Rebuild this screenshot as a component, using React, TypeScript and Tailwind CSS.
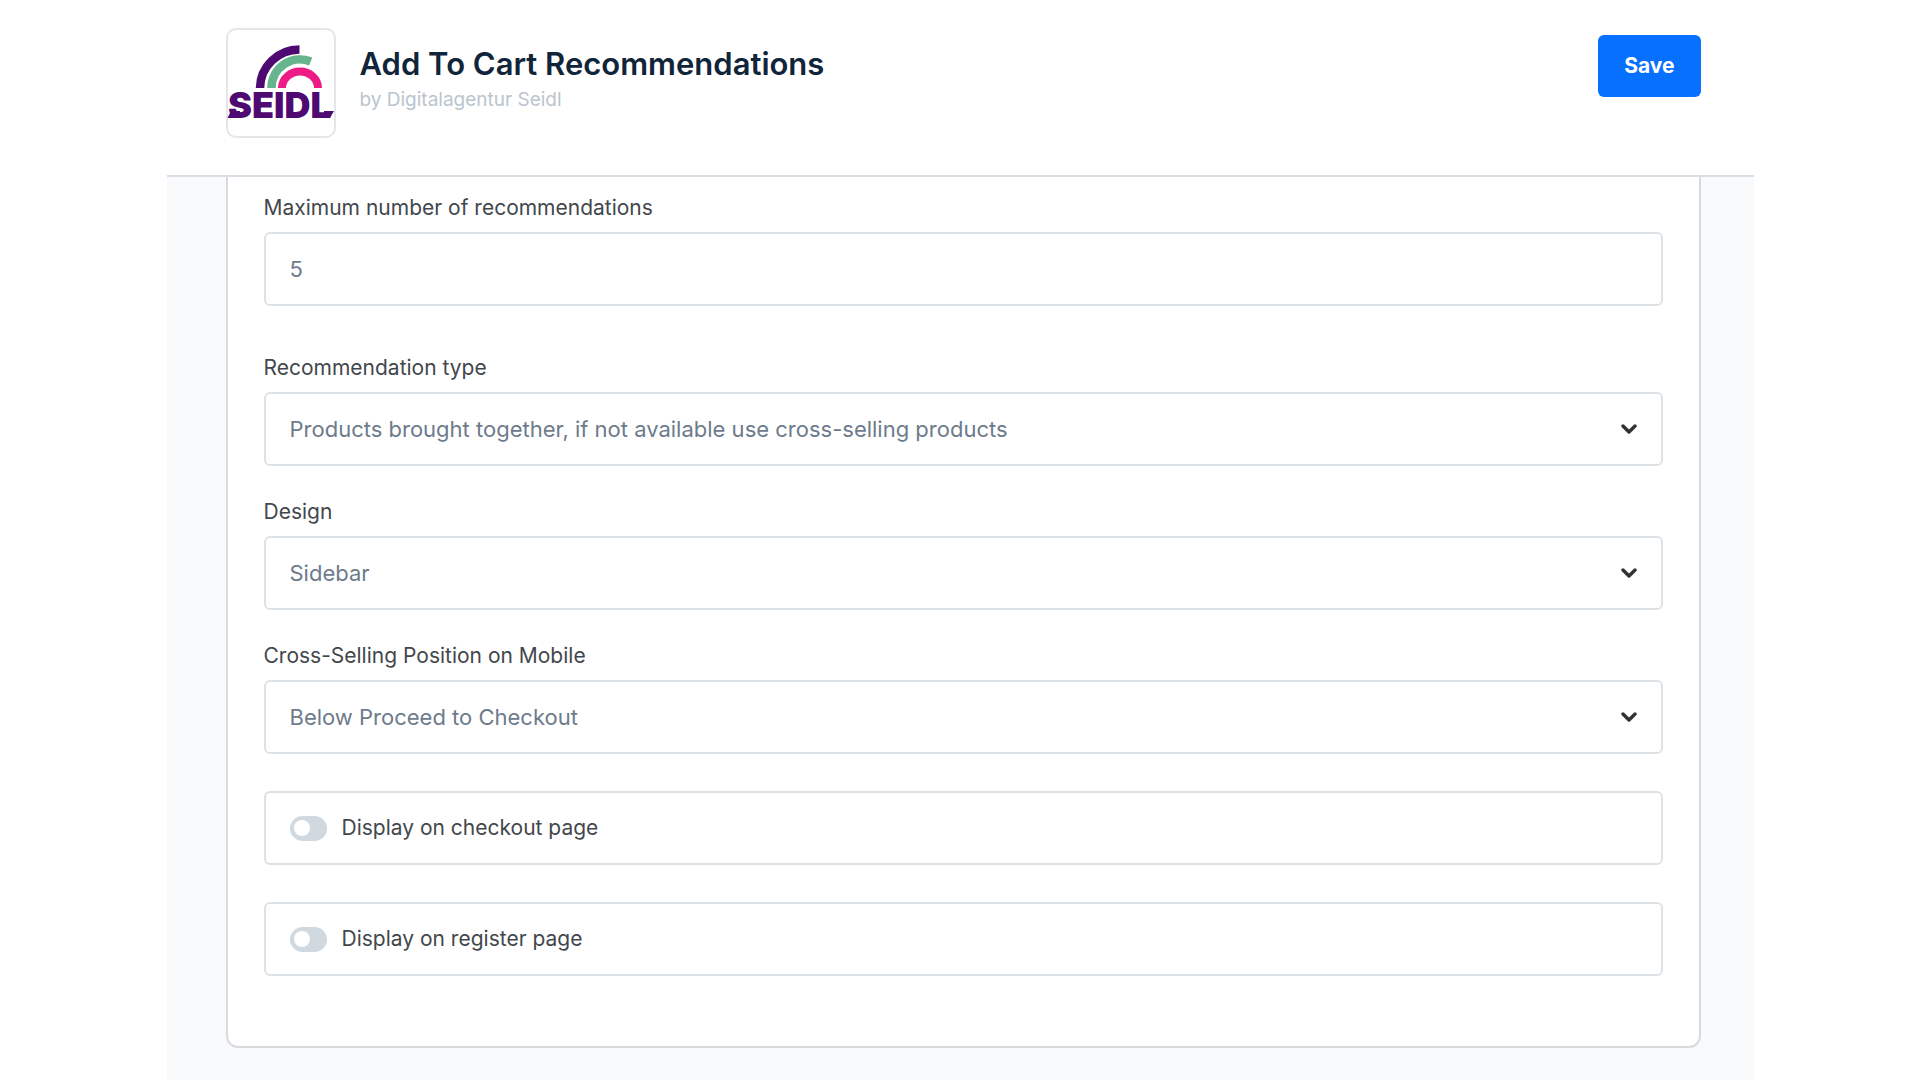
import { useState } from 'react'

const typeOptions = [
  'Products brought together, if not available use cross-selling products',
  'Cross-selling products',
]
const designOptions = ['Sidebar', 'Modal']
const positionOptions = ['Below Proceed to Checkout', 'Above Proceed to Checkout']

const Logo = () => (
  <svg viewBox="0 0 110 110" className="w-[110px] h-[110px] shrink-0" role="img" aria-label="Seidl">
    <rect x="1" y="1" width="108" height="108" rx="9" fill="#fff" stroke="#e6e6e8" strokeWidth="2" />
    <g fill="none">
      <path d="M34 60A39.5 39 0 0 1 73.5 21.5" stroke="#4f0a72" strokeWidth="8.5" />
      <path d="M45.5 60A28.5 28.5 0 0 1 84.7 33.5" stroke="#66b58f" strokeWidth="8.5" />
      <path d="M56 60A18 16.5 0 0 1 92 60" stroke="#ee1b84" strokeWidth="8" />
    </g>
    <text x="2" y="90" fontSize="36" fontWeight="900" fill="#4f0a72" className="font-['Inter',sans-serif]">
      SEIDL
    </text>
    <path d="M5 83H14V90H1.5ZM98 83H108L104 90H98Z" fill="#4f0a72" />
  </svg>
)

const SelectField = ({ id, label, options }: { id: string; label: string; options: string[] }) => (
  <div>
    <label htmlFor={id} className="block mb-2 text-[21px] leading-8">
      {label}
    </label>
    <div className="relative">
      <select
        id={id}
        className="block w-full h-[74px] appearance-none rounded-md border-2 border-[#dde2e7] bg-white px-6 text-[22px] text-[#6d7b8b]"
      >
        {options.map((o) => (
          <option key={o}>{o}</option>
        ))}
      </select>
      <svg
        viewBox="0 0 16 10"
        className="pointer-events-none absolute right-[26px] top-8 w-4 h-[10px]"
        fill="none"
        stroke="#303236"
        strokeWidth="3.4"
        strokeLinecap="round"
        strokeLinejoin="round"
      >
        <path d="M2 2l6 6 6-6" />
      </svg>
    </div>
  </div>
)

const ToggleField = ({ label }: { label: string }) => {
  const [on, setOn] = useState(false)

  return (
    <label className="flex items-center gap-[15px] h-[74px] rounded-md border-2 border-[#dde2e7] px-6 text-[21px]">
      <input
        type="checkbox"
        role="switch"
        checked={on}
        onChange={(e) => setOn(e.target.checked)}
        className="flex items-center appearance-none shrink-0 w-[37px] h-[25px] rounded-full bg-[#d1d9e0] px-1 checked:justify-end checked:bg-[#0870ff] before:block before:size-4 before:rounded-full before:bg-white before:content-['']"
      />
      {label}
    </label>
  )
}

export default function App() {
  const [max, setMax] = useState('5')

  return (
    <div className="min-h-screen bg-white font-['Inter',sans-serif] text-[#43474c]">
      <div className="mx-auto flex min-h-screen max-w-[1587px] flex-col">
        <header className="flex items-start border-b-2 border-[#d9dfe5] pl-[59px] pr-[53px] pt-[28px] pb-[37px]">
          <Logo />
          <div className="ml-6 pt-4">
            <h1 className="text-[31px] leading-10 font-semibold text-[#10243a]">Add To Cart Recommendations</h1>
            <p className="text-[19px] leading-8 text-[#bac5ce]">by Digitalagentur Seidl</p>
          </div>
          <button className="ml-auto mt-[7px] h-[62px] rounded-md bg-[#0870ff] px-[26px] text-[21px] font-bold text-white">
            Save
          </button>
        </header>

        <main className="flex-1 bg-[#f8fafc] pl-[59px] pr-[53px] pb-8">
          <form className="rounded-b-xl border-2 border-t-0 border-[#d8dade] bg-white px-9 pt-[15px] pb-[70px]">
            <label htmlFor="max" className="block mb-2 text-[21px] leading-8">
              Maximum number of recommendations
            </label>
            <input
              id="max"
              type="text"
              value={max}
              onChange={(e) => setMax(e.target.value)}
              className="block w-full h-[74px] rounded-md border-2 border-[#dde2e7] bg-white px-6 text-[22px] text-[#6d7b8b]"
            />

            <div className="mt-[46px] flex flex-col gap-[30px]">
              <SelectField id="type" label="Recommendation type" options={typeOptions} />
              <SelectField id="design" label="Design" options={designOptions} />
              <SelectField id="position" label="Cross-Selling Position on Mobile" options={positionOptions} />
            </div>

            <div className="mt-[37px] flex flex-col gap-[37px]">
              <ToggleField label="Display on checkout page" />
              <ToggleField label="Display on register page" />
            </div>
          </form>
        </main>
      </div>
    </div>
  )
}
